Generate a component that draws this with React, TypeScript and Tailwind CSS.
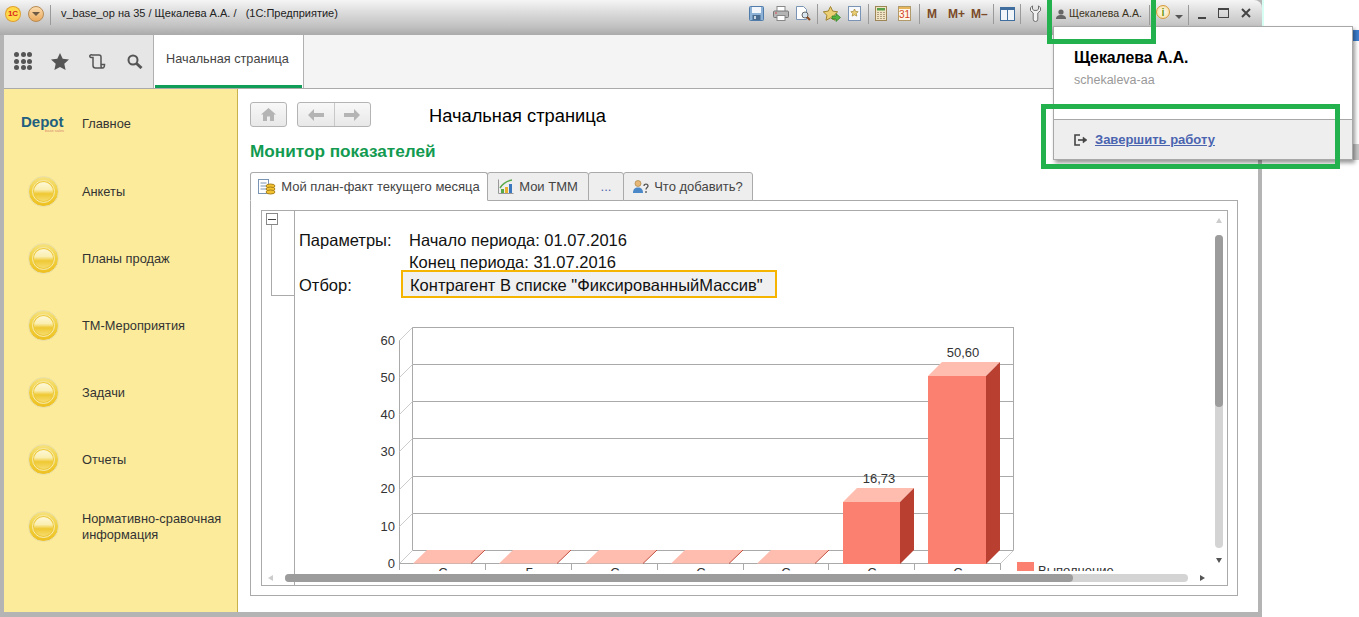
const FONT = "font-['Liberation_Sans',Arial,sans-serif]";

const SECTIONS = [
  "Анкеты",
  "Планы продаж",
  "ТМ-Мероприятия",
  "Задачи",
  "Отчеты",
  "Нормативно-сравочная информация",
];

const GRID_Y = [327, 364, 401, 438, 476, 513, 550];
const FLAT_BARS = [413, 499, 585, 671, 757];
const TICKS = [399, 485, 571, 657, 743, 828, 914, 1000];
const AXIS_LABELS = [
  ["С", 443],
  ["Г", 529],
  ["С", 615],
  ["С", 701],
  ["С", 786],
  ["С", 872],
  ["С", 958],
] as const;

function Separator() {
  return <div className="h-[20px] w-px bg-[#9a9a9a]" />;
}

function SaveIcon() {
  return (
    <svg width="15" height="15" viewBox="0 0 15 15">
      <rect x="0.5" y="0.5" width="14" height="14" rx="1" fill="#8db2d6" stroke="#4f7cab" />
      <rect x="3" y="1" width="9" height="6" fill="#f3f6fa" />
      <rect x="3.500" y="9" width="8" height="5" fill="#4a6c90" />
      <rect x="5" y="10" width="2" height="3" fill="#c8d6e4" />
    </svg>
  );
}

function PrintIcon() {
  return (
    <svg width="16" height="15" viewBox="0 0 16 15">
      <rect x="4" y="0.5" width="8" height="5" fill="#fff" stroke="#888" />
      <rect x="0.5" y="5" width="15" height="6.500" rx="1" fill="#b4b4b4" stroke="#777" />
      <rect x="4" y="9.500" width="8" height="5" fill="#fff" stroke="#888" />
      <rect x="2" y="6.500" width="2" height="1" fill="#d9534f" />
    </svg>
  );
}

function PreviewIcon() {
  return (
    <svg width="16" height="15" viewBox="0 0 16 15">
      <path d="M1.500 .5h7l3 3v10h-10z" fill="#fff" stroke="#7a94b5" />
      <circle cx="10" cy="9" r="3" fill="#d8e6f2" stroke="#666" />
      <path d="M12 11l3 3" stroke="#8a4a20" strokeWidth="2" />
    </svg>
  );
}

function StarAddIcon() {
  return (
    <svg width="18" height="16" viewBox="0 0 18 16">
      <path d="M7.500 .5l2.200 4.600 5 .7-3.600 3.500.9 5-4.500-2.400-4.500 2.400.9-5L.3 5.800l5-.7z" fill="#eccf72" stroke="#a08530" />
      <path d="M9 10h4V7.500l4.500 4-4.500 4V13H9z" fill="#55b33f" stroke="#2d7d23" strokeWidth=".7" />
    </svg>
  );
}

function StarPageIcon() {
  return (
    <svg width="13" height="15" viewBox="0 0 13 15">
      <rect x="0.5" y="0.5" width="12" height="14" fill="#f6f8fb" stroke="#7a94b5" />
      <path d="M6.500 3l1.100 2.400 2.500.3-1.800 1.800.5 2.600-2.300-1.300-2.300 1.300.5-2.600-1.800-1.800 2.500-.3z" fill="#eccf72" stroke="#a08530" strokeWidth=".7" />
    </svg>
  );
}

function CalcIcon() {
  return (
    <svg width="12" height="15" viewBox="0 0 12 15">
      <rect x="0.5" y="0.5" width="11" height="14" fill="#f2e3c4" stroke="#9c8656" />
      <rect x="2" y="2" width="8" height="2.500" fill="#5aa04a" />
      <path d="M2.500 6.500h1M5.500 6.500h1M8.500 6.500h1M2.500 8.500h1M5.500 8.500h1M8.500 8.500h1M2.500 10.500h1M5.500 10.500h1M8.500 10.500h1M2.500 12.500h1M5.500 12.500h1M8.500 12.500h1" stroke="#6b5a3a" />
    </svg>
  );
}

function CalendarIcon() {
  return (
    <div className="flex h-[15px] w-[13px] flex-col border border-[#b09a6a] bg-[#fff6e8]">
      <div className="h-[3px] bg-[#e8b65a]" />
      <div className="flex-1 text-center text-[10px] leading-[11px] text-[#d2401f]">31</div>
    </div>
  );
}

function PanelsIcon() {
  return (
    <div className="flex h-[14px] w-[15px] gap-px border border-t-[3px] border-[#3f6d9e] bg-[#3f6d9e]">
      <div className="flex-1 bg-[#f0f5fa]" />
      <div className="flex-1 bg-[#f0f5fa]" />
    </div>
  );
}

function WrenchIcon() {
  return (
    <svg width="11" height="17" viewBox="0 0 11 17" fill="#f1f1f1" stroke="#6e6e6e">
      <path d="M2.500.8v3.400L4 5.400h3l1.500-1.200V.8l2 2v2.800L7.800 8v6.200a2.300 2.300 0 01-4.600 0V8L.5 5.600V2.800z" />
    </svg>
  );
}

function Coin() {
  return (
    <div className="flex h-[31px] w-[31px] items-center justify-center rounded-full border border-[#eadfa8] bg-[linear-gradient(#f6e27e_0%,#f0cf3c_50%,#eec020_100%)]">
      <div className="flex h-[23px] w-[23px] items-center justify-center rounded-full border border-[#f8ecb0] bg-[#eec93a]">
        <div className="h-[19px] w-[19px] rounded-full bg-[linear-gradient(#fdf8d8_0%,#faeeb0_40%,#efc832_62%,#f6dc6e_100%)]" />
      </div>
    </div>
  );
}

function NavButton({ children }: { children: React.ReactNode }) {
  return <div className="flex h-[23px] w-[36px] items-center justify-center text-[#b4b4b4]">{children}</div>;
}

function ArrowLeft() {
  return (
    <svg width="16" height="12" viewBox="0 0 16 12" fill="currentColor">
      <path d="M6 0v4h10v4H6v4L0 6z" />
    </svg>
  );
}

function ArrowRight() {
  return (
    <svg width="16" height="12" viewBox="0 0 16 12" fill="currentColor">
      <path d="M10 0v4H0v4h10v4l6-6z" />
    </svg>
  );
}

function TitleBar() {
  return (
    <div className="flex h-[35px] shrink-0 items-start rounded-tr-[8px] bg-[linear-gradient(#f5f5f5_0%,#dcdcdc_35%,#c2c2c2_75%,#aaaaaa_100%)] pt-[5px] text-[#222]">
      <div className="ml-[6px] mt-[2px] flex h-[14px] w-[14px] items-center justify-center rounded-full bg-[#ffd94a] text-[8px] font-bold text-[#d8261c] shadow-[0_0_0_1px_#e0a030]">
        1С
      </div>
      <div className="ml-[8px] mt-px flex h-[16px] w-[16px] items-center justify-center rounded-full border border-[#b88a50] bg-[linear-gradient(#fbdcae,#eba95c)]">
        <div className="h-0 w-0 border-x-[4px] border-t-[4px] border-x-transparent border-t-[#6e5a44]" />
      </div>
      <div className="ml-[6px]">
        <Separator />
      </div>
      <div className="ml-[10px] mt-[1px] w-[688px] whitespace-pre text-[11px] leading-[15px]">
        v_base_op на 35 / Щекалева А.А. /   (1С:Предприятие)
      </div>
      <div className="flex h-[17px] items-center">
        <SaveIcon />
        <div className="ml-[9px]"><PrintIcon /></div>
        <div className="ml-[6px]"><PreviewIcon /></div>
        <div className="ml-[6px]"><Separator /></div>
        <div className="ml-[5px]"><StarAddIcon /></div>
        <div className="ml-[7px]"><StarPageIcon /></div>
        <div className="ml-[7px]"><Separator /></div>
        <div className="ml-[6px]"><CalcIcon /></div>
        <div className="ml-[11px]"><CalendarIcon /></div>
        <div className="ml-[8px]"><Separator /></div>
        <div className="ml-[7px] flex text-[12px] font-bold text-[#7a4a28]">
          <span className="w-[21px]">M</span>
          <span className="w-[23px]">M+</span>
          <span className="w-[22px]">M–</span>
        </div>
        <Separator />
        <div className="ml-[6px]"><PanelsIcon /></div>
        <div className="ml-[5px]"><Separator /></div>
        <div className="ml-[9px]"><WrenchIcon /></div>
      </div>
      <div className="ml-[15px] flex h-[17px] items-center">
        <svg width="10" height="10" viewBox="0 0 10 10" fill="#666">
          <circle cx="5" cy="3" r="2.600" />
          <path d="M0 10c0-3 2-4 5-4s5 1 5 4z" />
        </svg>
        <span className="ml-[3px] w-[74px] whitespace-nowrap text-[10.6px] text-[#3a3320]">Щекалева А.А.</span>
      </div>
      <div className="ml-[6px]"><Separator /></div>
      <div className="ml-[6px] flex h-[14px] w-[14px] items-center justify-center rounded-full border border-[#d59a3a] bg-[radial-gradient(#fff,#f7d68a)] text-[11px] font-bold text-[#6f9a1e]">
        i
      </div>
      <div className="ml-[5px] mt-[10px] h-0 w-0 border-x-[4px] border-t-[4px] border-x-transparent border-t-[#555]" />
      <div className="ml-[5px]"><Separator /></div>
      <div className="ml-[9px] mt-[12px] h-[2px] w-[8px] bg-[#444]" />
      <div className="ml-[12px] mt-[3px] h-[10px] w-[11px] border border-t-2 border-[#444]" />
      <svg className="ml-[12px] mt-[3px]" width="10" height="10" viewBox="0 0 10 10" stroke="#444" strokeWidth="2">
        <path d="M1 1l8 8M9 1l-8 8" />
      </svg>
    </div>
  );
}

function SectionBar() {
  return (
    <div className="flex h-[54px] shrink-0 border-b border-[#aaaaaa] bg-[#f4f4f4]">
      <div className="flex w-[149px] items-center bg-[#e6e6e6] pb-[1px]">
        <div className="ml-[10px] grid grid-cols-3 gap-[1.5px]">
          {Array.from({ length: 9 }).map((_, i) => (
            <div key={i} className="h-[5px] w-[5px] rounded-full bg-[#555]" />
          ))}
        </div>
        <svg className="ml-[19px]" width="18" height="17" viewBox="0 0 18 17" fill="#555">
          <path d="M9 0l2.700 5.800 6.300.7-4.700 4.300 1.300 6.200L9 13.900 3.400 17l1.300-6.200L0 6.500l6.300-.7z" />
        </svg>
        <svg className="ml-[20px]" width="17" height="15" viewBox="0 0 17 15" fill="none" stroke="#555" strokeWidth="1.500">
          <path d="M4 3.500H2a1.300 1.300 0 01-.4-2.500c.6-.3 1.200-.2 1.800 0H10c1 0 2 .8 2 2v9c0 1 .7 2 2 2h-7.500C5.200 14 4 13 4 11.500z" />
          <path d="M12 10.500h3.500c.1 1.500-.5 3.500-1.500 3.500" />
        </svg>
        <svg className="ml-[21px]" width="16" height="15" viewBox="0 0 16 15" fill="none" stroke="#555">
          <circle cx="6" cy="6" r="4.500" strokeWidth="2" />
          <path d="M9.500 9.500L14.500 14" strokeWidth="3" />
        </svg>
      </div>
      <div className="relative flex w-[151px] items-center justify-center border-x border-[#b0b0b0] bg-white pb-[3px] pr-[2px] text-[12.7px] text-[#444]">
        Начальная страница
        <div className="absolute inset-x-px bottom-0 h-[3px] bg-[#0f9d58]" />
      </div>
    </div>
  );
}

function Sidebar() {
  return (
    <div className="flex w-[234px] shrink-0 flex-col border-r border-[#c9b24e] bg-[#fbeb9b] pt-px text-[12.8px] leading-[16px] text-[#333]">
      <div className="flex h-[68px] items-center">
        <div className="ml-[17px] w-[61px]">
          <div className="text-[15px] font-bold leading-[14px] text-[#1f5f7f]">Depot</div>
          <div className="ml-[24px] text-[4px] leading-[4px] text-[#d98a70]">base sales</div>
        </div>
        <span>Главное</span>
      </div>
      {SECTIONS.map((label) => (
        <div key={label} className="flex h-[67px] items-center">
          <div className="ml-[24px] mr-[23px]">
            <Coin />
          </div>
          <span className="w-[145px]">{label}</span>
        </div>
      ))}
    </div>
  );
}

function Chart() {
  return (
    <svg className="ml-[71px] mt-[22px] block" width="800" height="251" viewBox="370 320 800 251">
      <g stroke="#aaaaaa" fill="none">
        {GRID_Y.map((y) => (
          <path key={y} d={`M412.500 ${y + 0.5}H1013.500`} />
        ))}
        <path d="M412.500 327V550.500M1013.500 327V550.500M399.500 340V563.500H1000.500" />
        {GRID_Y.map((y) => (
          <path key={y} d={`M412.500 ${y + 0.5}L399.500 ${y + 13.5}`} stroke="#cccccc" />
        ))}
        <path d="M1013.500 550.500L1000.500 563.500" stroke="#cccccc" />
        {TICKS.map((x) => (
          <path key={x} d={`M${x + 0.5} 563V570`} />
        ))}
      </g>
      {FLAT_BARS.map((x) => (
        <g key={x}>
          <path d={`M${x} 563.500L${x + 14} 550H${x + 72}L${x + 58} 563.500z`} fill="#ffbdb0" />
          <path d={`M${x + 58} 563.500L${x + 72} 550`} stroke="#c0503f" />
        </g>
      ))}
      <path d="M843 502L857 488H914L900 502z" fill="#ffbdb0" />
      <path d="M900 502L914 488V550L900 564z" fill="#b94030" />
      <rect x="843" y="502" width="57" height="62" fill="#fc8070" />
      <path d="M928 376L942 362H1000L986 376z" fill="#ffbdb0" />
      <path d="M986 376L1000 362V550L986 564z" fill="#b94030" />
      <rect x="928" y="376" width="58" height="188" fill="#fc8070" />
      <rect x="1017" y="562" width="17" height="10" fill="#fc8070" />
      <g fontSize="13" fill="#333" textAnchor="end" fontFamily="Liberation Sans">
        {[60, 50, 40, 30, 20, 10, 0].map((n, i) => (
          <text key={n} x="395" y={344.5 + i * 37.2}>
            {n}
          </text>
        ))}
      </g>
      <g fontSize="13" fill="#333" textAnchor="middle" fontFamily="Liberation Sans">
        <text x="879" y="483">16,73</text>
        <text x="963" y="357">50,60</text>
        {AXIS_LABELS.map(([t, x]) => (
          <text key={x} x={x} y="577">
            {t}
          </text>
        ))}
      </g>
      <text x="1038" y="575" fontSize="13" fill="#333" fontFamily="Liberation Sans">
        Выполнение
      </text>
    </svg>
  );
}

function ReportPanel() {
  return (
    <div className="relative flex h-[376px] w-[967px] overflow-hidden border border-[#aaaaaa] bg-white">
      <div className="relative w-[33px] shrink-0 border-r border-[#aaaaaa]">
        <div className="absolute left-[4px] top-[2px] flex h-[12px] w-[12px] items-center justify-center border border-[#888] bg-white">
          <div className="h-px w-[8px] bg-[#444]" />
        </div>
        <div className="absolute left-[9px] top-[14px] h-[71px] w-[24px] border-b border-l border-[#aaaaaa]" />
      </div>
      <div className="flex-1 pl-[4px] pt-[18px] text-[16.5px] leading-[22px] text-[#111]">
        <div className="flex">
          <span className="w-[110px]">Параметры:</span>
          <span>Начало периода: 01.07.2016</span>
        </div>
        <div className="pl-[110px]">Конец периода: 31.07.2016</div>
        <div className="-mt-[3px] flex items-center">
          <span className="w-[102px] pt-px">Отбор:</span>
          <span className="h-[28px] w-[376px] border-2 border-[#f5b400] bg-[#f0f0f0] pl-[7px] leading-[26px]">
            Контрагент В списке "ФиксированныйМассив"
          </span>
        </div>
        <Chart />
      </div>
      {/* scrollbars over the report */}
      <div className="absolute left-[953px] top-[24px] h-[313px] w-[8px] rounded-full bg-[#d4d4d4]">
        <div className="h-[172px] rounded-full bg-[#9c9c9c]" />
      </div>
      <div className="absolute left-[954px] top-[7px] h-0 w-0 border-x-[3.5px] border-b-[5px] border-x-transparent border-b-[#cccccc]" />
      <div className="absolute left-[954px] top-[347px] h-0 w-0 border-x-[3.5px] border-t-[5px] border-x-transparent border-t-[#555]" />
      <div className="absolute left-[23px] top-[363px] h-[8px] w-[903px] rounded-full bg-[#d4d4d4]">
        <div className="h-[8px] w-[788px] rounded-full bg-[#9c9c9c]" />
      </div>
      <div className="absolute left-[6px] top-[364px] h-0 w-0 border-y-[3.5px] border-r-[5px] border-y-transparent border-r-[#cccccc]" />
      <div className="absolute left-[938px] top-[364px] h-0 w-0 border-y-[3.5px] border-l-[5px] border-y-transparent border-l-[#555]" />
    </div>
  );
}

function Tab({
  active,
  width,
  icon,
  label,
  labelClass = "text-[#444]",
}: {
  active?: boolean;
  width: string;
  icon?: React.ReactNode;
  label: string;
  labelClass?: string;
}) {
  return (
    <div
      className={`flex h-[29px] items-center justify-center gap-[5px] rounded-t-[3px] border border-[#aaaaaa] text-[13px] ${labelClass} ${width} ${
        active ? "relative z-10 border-b-white bg-white" : "-ml-px bg-[#eeeeee]"
      }`}
    >
      {icon}
      {label}
    </div>
  );
}

function MainArea() {
  return (
    <div className="min-w-0 flex-1 bg-white pl-[12px] pt-[13px]">
      <div className="flex h-[25px] items-center">
        <div className="rounded-[3px] border border-[#b4b4b4] bg-[linear-gradient(#f8f8f8,#e8e8e8)]">
          <div className="flex h-[23px] w-[35px] items-center justify-center">
            <svg width="15" height="13" viewBox="0 0 15 13" fill="#b4b4b4">
              <path d="M7.500 0L15 6.500h-2V13H9V8.500H6V13H2V6.500H0z" />
            </svg>
          </div>
        </div>
        <div className="ml-[10px] flex h-[25px] rounded-[3px] border border-[#b4b4b4] bg-[linear-gradient(#f8f8f8,#e8e8e8)]">
          <NavButton>
            <ArrowLeft />
          </NavButton>
          <div className="w-px bg-[#c8c8c8]" />
          <div className="-ml-px">
            <NavButton>
              <ArrowRight />
            </NavButton>
          </div>
        </div>
        <div className="ml-[58px] whitespace-nowrap pt-[2px] text-[18.3px] text-black">Начальная страница</div>
      </div>
      <div className="mt-[14px] text-[17.2px] font-bold leading-[20px] text-[#119a50]">Монитор показателей</div>
      <div className="mt-[11px] flex">
        <Tab
          active
          width="w-[238px]"
          label="Мой план-факт текущего месяца"
          icon={
            <svg width="18" height="16" viewBox="0 0 18 16">
              <rect x="0.5" y="0.5" width="10" height="14" fill="#fff" stroke="#7a94b5" />
              <path d="M2.500 4h6M2.500 7h6M2.500 10h6" stroke="#7a94b5" />
              <ellipse cx="12.500" cy="7" rx="4.500" ry="2" fill="#f2c230" stroke="#a8801a" />
              <ellipse cx="12.500" cy="10" rx="4.500" ry="2" fill="#f2c230" stroke="#a8801a" />
              <ellipse cx="12.500" cy="13" rx="4.500" ry="2" fill="#f2c230" stroke="#a8801a" />
            </svg>
          }
        />
        <Tab
          width="w-[102px]"
          label="Мои ТММ"
          icon={
            <svg width="16" height="15" viewBox="0 0 16 15">
              <path d="M.5.5v14h15" fill="none" stroke="#999" />
              <rect x="3" y="10" width="3" height="4" fill="#58a848" />
              <rect x="7" y="8" width="3" height="6" fill="#e8b030" />
              <rect x="11" y="5" width="3" height="9" fill="#3a78c0" />
              <path d="M2 9C5 4 8 2 14 1" fill="none" stroke="#58a848" strokeWidth="1.500" />
            </svg>
          }
        />
        <Tab width="w-[36px]" label="..." labelClass="text-[#4a64b0]" />
        <Tab
          width="w-[130px]"
          label="Что добавить?"
          icon={
            <svg width="16" height="14" viewBox="0 0 16 14">
              <circle cx="5" cy="3.500" r="3" fill="#e8b878" stroke="#a07838" strokeWidth=".6" />
              <path d="M0 13c0-4 2-5.500 5-5.500S10 9 10 13z" fill="#4a88c8" />
              <path d="M11 6c0-2.500 4-2.500 4 0 0 1.500-2 1.500-2 3.500M13 11v2" fill="none" stroke="#555" strokeWidth="1.300" />
            </svg>
          }
        />
      </div>
      <div className="-mt-px h-[396px] w-[988px] border border-[#aaaaaa] pl-[10px] pt-[9px]">
        <ReportPanel />
      </div>
    </div>
  );
}

function UserPopup() {
  return (
    <div className="absolute left-[1053px] top-[26px] flex h-[134px] w-[300px] flex-col border border-[#a8a8a8] bg-white shadow-[2px_3px_4px_rgba(0,0,0,0.4)]">
      <div className="h-[92px] pl-[20px] pt-[21px]">
        <div className="text-[15.8px] font-bold leading-[20px] text-black">Щекалева А.А.</div>
        <div className="mt-[4px] text-[12.5px] leading-[16px] text-[#999]">schekaleva-aa</div>
      </div>
      <div className="flex flex-1 items-center border-t border-[#a8a8a8] bg-[#eeeeee] pl-[20px]">
        <svg width="14" height="12" viewBox="0 0 14 12" fill="none" stroke="#444" strokeWidth="1.600">
          <path d="M6 1H1v10h5" />
          <path d="M4 6h7" />
          <path d="M9 3l4 3-4 3z" fill="#444" strokeWidth=".5" />
        </svg>
        <a className="ml-[7px] text-[13px] font-bold text-[#4a64b0] underline">Завершить работу</a>
      </div>
    </div>
  );
}

export default function App() {
  return (
    <div className={`relative h-[617px] w-[1359px] overflow-hidden bg-white ${FONT}`}>
      <div className="flex h-[617px] w-[1262px] flex-col bg-[#b4b4b4] px-[4px] pb-[5px]">
        <div className="-mx-[4px]">
          <TitleBar />
        </div>
        <SectionBar />
        <div className="flex min-h-0 flex-1">
          <Sidebar />
          <MainArea />
        </div>
      </div>
      <div className="absolute left-[1262px] top-0 h-[26px] w-[2px] bg-[#d8fff4]" />
      <div className="absolute left-[1353px] top-[30px] h-[11px] w-[6px] bg-[#3d7fd0]" />
      <div className="absolute left-[1353px] top-[144px] h-[16px] w-[6px] bg-[#c8c8c8]" />
      <UserPopup />
      {/* green callouts drawn on top of the screenshot */}
      <div className="absolute left-[1047px] top-0 h-[44px] w-[109px] border-[5px] border-t-0 border-[#22b14c]" />
      <div className="absolute left-[1041px] top-[104px] h-[65px] w-[299px] border-[5px] border-[#22b14c]" />
    </div>
  );
}
